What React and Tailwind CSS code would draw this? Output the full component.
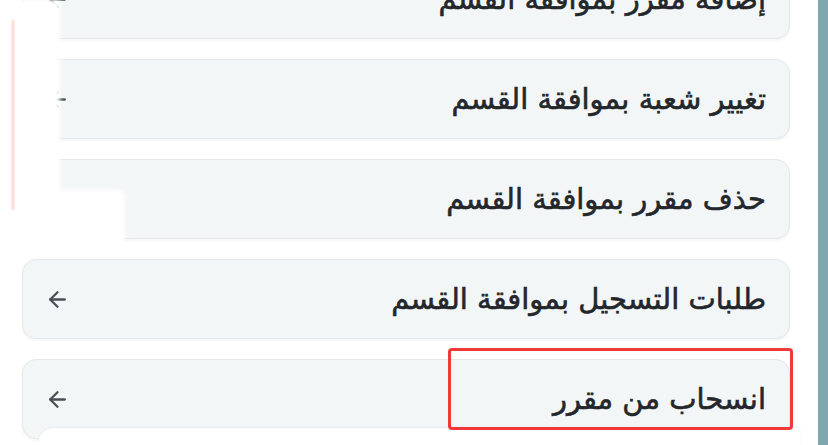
import { ArrowLeft } from "lucide-react"

const items = [
    "إضافة مقرر بموافقة القسم",
    "تغيير شعبة بموافقة القسم",
    "حذف مقرر بموافقة القسم",
    "طلبات التسجيل بموافقة القسم",
    "انسحاب من مقرر",
]

const MenuCard = ({ title }) => {
    return (
        <div className="h-[80px] shrink-0 rounded-[14px] border border-[#e4e8ea] bg-[#f3f6f7] shadow-[0_2px_2px_rgba(0,0,0,0.04)] flex items-center justify-between pl-[22px] pr-[23px]">
            <ArrowLeft className="w-[25px] h-[25px] text-[#4a4f55]" strokeWidth={2.2} />
            <span dir="rtl" className="text-[29px] font-normal text-[#23272b] leading-none [-webkit-text-stroke:0.6px_#23272b]" style={{ fontFamily: '"DejaVu Sans", sans-serif' }}>
                {title}
            </span>
        </div>
    )
}

export default function App() {
    return (
        <div className="relative w-[828px] h-[445px] overflow-hidden bg-white">
            <div className="flex h-full">
                <div className="flex-1 flex flex-col gap-[20px] mt-[-41px] pl-[22px]">
                    {items.map((t) => (
                        <MenuCard key={t} title={t} />
                    ))}
                </div>
                <div className="w-[28px] shrink-0" />
                <div className="w-[10px] shrink-0 bg-[#7ea8ae]" />
            </div>

            {/* erased areas on the left */}
            <div className="absolute left-0 top-0 w-[60px] h-[250px] bg-white blur-[2px]" />
            <div className="absolute left-[10px] top-[190px] w-[115px] h-[58px] bg-white rounded-[6px] blur-[2px]" />
            <div className="absolute left-[12px] top-[20px] w-[2px] h-[190px] bg-[#f6b3a8] opacity-70 blur-[1px]" />

            {/* popup edge at the bottom */}
            <div className="absolute left-[38px] top-[428px] w-[762px] h-[40px] bg-white rounded-tl-[16px] shadow-[0_-1px_2px_rgba(0,0,0,0.05)]" />

            {/* red highlight */}
            <div className="absolute left-[448px] top-[348px] w-[345px] h-[82px] border-[3px] border-[#f2393a] rounded-[4px]" />
        </div>
    )
}
